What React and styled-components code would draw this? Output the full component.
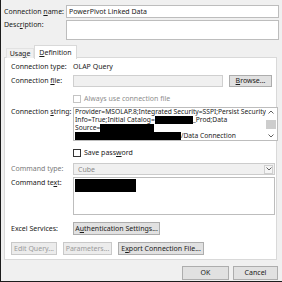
import React from "react";
import styled, { createGlobalStyle } from "styled-components";

const Global = createGlobalStyle`
  html, body { margin: 0; padding: 0; background: #f0f0f0; }
  * { box-sizing: border-box; }
`;

const Dialog = styled.div`
  width: 282px;
  height: 282px;
  background: #f0f0f0;
  border-left: 1px solid #1c1c1c;
  border-bottom: 1px solid #1c1c1c;
  padding: 5px 3px 0 3px;
  display: flex;
  flex-direction: column;
  font-family: "Noto Sans", "Open Sans", sans-serif;
  font-size: 7px;
  color: #1a1a1a;
  overflow: hidden;
`;

const FieldRow = styled.div`
  display: grid;
  grid-template-columns: 62px 1fr;
  height: ${(p) => p.$h}px;
  margin-top: ${(p) => p.$top || 0}px;
  align-items: ${(p) => (p.$alignTop ? "start" : "center")};
`;

const Label = styled.div`
  white-space: nowrap;
  line-height: ${(p) => p.$lh || 10}px;
  color: ${(p) => (p.$disabled ? "#7a7a7a" : "#1a1a1a")};
  padding-top: ${(p) => p.$pt || 0}px;
`;

const TextBox = styled.div`
  height: 100%;
  background: ${(p) => (p.$disabled ? "#f0f0f0" : "#fff")};
  border: 1px solid ${(p) => (p.$disabled ? "#cfcfcf" : "#bdbdbd")};
  padding: 0 2px;
  line-height: 11px;
  white-space: nowrap;
  overflow: hidden;
`;

const Tabs = styled.div`
  display: flex;
  align-items: flex-end;
  margin-top: 4px;
  padding-left: 2px;
  height: 14px;
  position: relative;
  z-index: 1;
`;

const Tab = styled.div`
  width: ${(p) => p.$w}px;
  height: ${(p) => (p.$active ? 14 : 10)}px;
  margin-bottom: ${(p) => (p.$active ? -1 : 0)}px;
  background: ${(p) => (p.$active ? "#fff" : "#f0f0f0")};
  border: 1px solid ${(p) => (p.$active ? "#d9d9d9" : "#e2e2e2")};
  border-bottom: none;
  display: flex;
  align-items: center;
  justify-content: center;
  line-height: 10px;
  padding-top: 1px;
`;

const Panel = styled.div`
  width: 273px;
  height: 203px;
  margin-top: -1px;
  background: #fff;
  border: 1px solid #d9d9d9;
  padding: 4px 1px 3px 6px;
  display: flex;
  flex-direction: column;
`;

const Row = styled.div`
  display: grid;
  grid-template-columns: 62px 1fr;
  height: ${(p) => p.$h}px;
  margin-top: ${(p) => p.$top || 0}px;
  align-items: ${(p) => (p.$alignTop ? "start" : "center")};
`;

const Inline = styled.div`
  display: flex;
  align-items: center;
  gap: ${(p) => p.$gap || 0}px;
  height: 100%;
`;

const Button = styled.div`
  width: ${(p) => p.$w}px;
  height: ${(p) => p.$h || 13}px;
  flex: none;
  background: ${(p) => (p.$disabled ? "#ececec" : "#e1e1e1")};
  border: 1px solid ${(p) => (p.$disabled ? "#c9c9c9" : "#adadad")};
  color: ${(p) => (p.$disabled ? "#9b9b9b" : "#1a1a1a")};
  display: flex;
  align-items: center;
  justify-content: center;
  white-space: nowrap;
  line-height: 10px;
  margin-right: ${(p) => p.$mr || 0}px;
`;

const Check = styled.span`
  width: 8px;
  height: 8px;
  flex: none;
  background: #fff;
  border: 1px solid ${(p) => (p.$disabled ? "#c4c4c4" : "#333")};
  margin-right: 3px;
`;

const CheckText = styled.span`
  color: ${(p) => (p.$disabled ? "#8d8d8d" : "#1a1a1a")};
  line-height: 8px;
`;

const Memo = styled.div`
  height: 100%;
  background: #fff;
  border: 1px solid #bdbdbd;
  display: flex;
  padding: ${(p) => p.$pad || "0 0 0 1px"};
`;

const MemoText = styled.div`
  flex: 1;
  overflow: hidden;
  white-space: nowrap;
  font-size: 6.7px;
`;

const Line = styled.div`
  height: 8px;
  line-height: 8px;
  display: flex;
  align-items: center;
`;

const Redact = styled.span`
  display: inline-block;
  flex: none;
  width: ${(p) => p.$w}px;
  height: ${(p) => p.$h || 8}px;
  background: #000;
`;

const ScrollBar = styled.div`
  width: 10px;
  margin: 2px 1px 2px 0;
  display: flex;
  flex-direction: column;
  align-items: center;
  justify-content: space-between;
`;

const Thumb = styled.div`
  width: 10px;
  height: 9px;
  background: #cdcdcd;
`;

const Select = styled.div`
  height: 100%;
  background: #f0f0f0;
  border: 1px solid #cccccc;
  display: flex;
  align-items: center;
  justify-content: space-between;
  padding: 0 1px 0 4px;
  color: #8a8a8a;
`;

const DropArrow = styled.div`
  width: 9px;
  height: 9px;
  border: 1px solid #cfcfcf;
  background: #f5f5f5;
  display: flex;
  align-items: center;
  justify-content: center;
`;

const ButtonRow = styled.div`
  display: flex;
  gap: ${(p) => p.$gap || 6}px;
  height: 13px;
  margin-top: ${(p) => p.$top || 0}px;
  justify-content: ${(p) => (p.$end ? "flex-end" : "flex-start")};
  padding-right: ${(p) => p.$pr || 0}px;
`;

const Chevron = ({ up }) => (
  <svg width="6" height="4" viewBox="0 0 6 4">
    <path
      d={up ? "M0.5 3.5 L3 1 L5.5 3.5" : "M0.5 0.5 L3 3 L5.5 0.5"}
      fill="none"
      stroke="#606060"
      strokeWidth="1"
    />
  </svg>
);

export default function App() {
  return (
    <>
      <Global />
      <Dialog>
        <FieldRow $h={13}>
          <Label>
            Connection <u>n</u>ame:
          </Label>
          <TextBox>PowerPivot Linked Data</TextBox>
        </FieldRow>
        <FieldRow $h={20} $top={2} $alignTop>
          <Label>
            Desc<u>r</u>iption:
          </Label>
          <TextBox />
        </FieldRow>

        <Tabs>
          <Tab $w={28}>
            Usa<u>g</u>e
          </Tab>
          <Tab $w={43} $active>
            <u>D</u>efinition
          </Tab>
        </Tabs>

        <Panel>
          <Row $h={10}>
            <Label>Connection type:</Label>
            <Label>OLAP Query</Label>
          </Row>
          <Row $h={12} $top={3}>
            <Label>
              Connection <u>f</u>ile:
            </Label>
            <Inline $gap={6}>
              <TextBox $disabled style={{ flex: 1 }} />
              <Button $w={43} $h={12} $mr={3}>
                <u>B</u>rowse...
              </Button>
            </Inline>
          </Row>
          <Row $h={8} $top={8}>
            <span />
            <Inline>
              <Check $disabled />
              <CheckText $disabled>Always use connection file</CheckText>
            </Inline>
          </Row>
          <Row $h={34} $top={4} $alignTop>
            <Label $pt={1} $lh={8}>
              Connection <u>s</u>tring:
            </Label>
            <Memo>
              <MemoText>
                <Line>Provider=MSOLAP.8;Integrated Security=SSPI;Persist Security</Line>
                <Line>
                  Info=True;Initial Catalog=
                  <Redact $w={38} />
                  _Prod;Data
                </Line>
                <Line>
                  Source=
                  <Redact $w={54} />
                </Line>
                <Line>
                  <Redact $w={106} />
                  /Data Connection
                </Line>
              </MemoText>
              <ScrollBar>
                <Chevron up />
                <Thumb />
                <Chevron />
              </ScrollBar>
            </Memo>
          </Row>
          <Row $h={8} $top={8}>
            <span />
            <Inline>
              <Check />
              <CheckText>
                Save pass<u>w</u>ord
              </CheckText>
            </Inline>
          </Row>
          <Row $h={12} $top={6}>
            <Label $disabled>Command type:</Label>
            <Select>
              Cube
              <DropArrow>
                <Chevron />
              </DropArrow>
            </Select>
          </Row>
          <Row $h={38} $top={2} $alignTop>
            <Label $pt={1}>
              Command te<u>x</u>t:
            </Label>
            <Memo $pad="1px">
              <Redact $w={61} $h={13} />
            </Memo>
          </Row>
          <Row $h={13} $top={7}>
            <Label>Excel Services:</Label>
            <Inline>
              <Button $w={87}>
                A<u>u</u>thentication Settings...
              </Button>
            </Inline>
          </Row>
          <ButtonRow $top={7}>
            <Button $w={46} $disabled>
              Edit Query...
            </Button>
            <Button $w={49} $disabled>
              Parameters...
            </Button>
            <Button $w={86}>
              E<u>x</u>port Connection File...
            </Button>
          </ButtonRow>
        </Panel>

        <ButtonRow $top={6} $gap={4} $end $pr={1}>
          <Button $w={47} $h={14}>
            OK
          </Button>
          <Button $w={45} $h={14}>
            Cancel
          </Button>
        </ButtonRow>
      </Dialog>
    </>
  );
}
